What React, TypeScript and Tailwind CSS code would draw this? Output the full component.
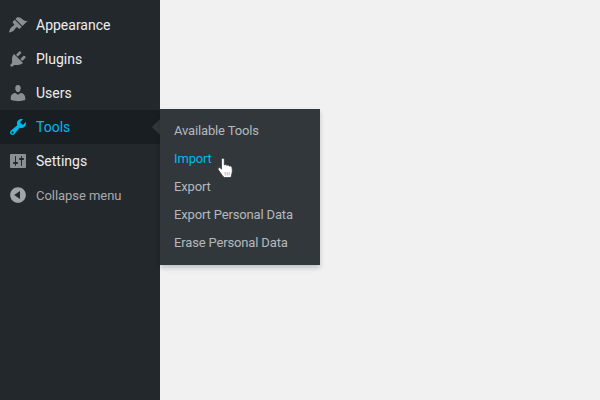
const icons = {
  appearance:
    "M14.48 11.06L7.41 3.99l1.5-1.5c.5-.56 2.3-.47 3.51.32 1.21.8 1.43 1.28 2.91 2.1 1.18.64 2.45 1.26 4.45.85zm-.71.71L6.7 4.7 4.93 6.47c-.39.39-.39 1.02 0 1.41l1.06 1.06c.39.39.39 1.03 0 1.42-.6.6-1.43 1.11-2.21 1.69-.35.26-.7.53-1.01.84C1.6 14.1 1 17.46 1 17.46s3.36-.6 4.57-1.77c.31-.31.58-.66.84-1.01.58-.78 1.09-1.61 1.69-2.21.39-.39 1.03-.39 1.42 0l1.06 1.06c.39.39 1.02.39 1.41 0z",
  plugins:
    "M13.11 4.36L9.87 7.6 8 5.73l3.24-3.24c.35-.34 1.05-.2 1.56.32.52.51.66 1.21.31 1.55zm-8 1.77l.91-1.12 9.01 9.01-1.19.84c-.71.71-2.63 1.16-3.82 1.16H6.14L4.9 17.26c-.59.59-1.54.59-2.12 0-.59-.58-.59-1.53 0-2.12l1.24-1.24v-3.88c0-1.13.4-3.19 1.09-3.89zm7.26 3.97l3.24-3.24c.34-.35 1.04-.21 1.55.31.52.51.66 1.21.31 1.55l-3.24 3.25z",
  users:
    "M10 9.25c-2.27 0-2.73-3.44-2.73-3.44C7 4.02 7.82 2 9.97 2c2.16 0 2.98 2.02 2.71 3.81 0 0-.41 3.44-2.68 3.44zm0 2.57L12.72 10c2.39 0 4.52 2.33 4.52 4.53v2.49s-3.65 1.13-7.24 1.13c-3.65 0-7.24-1.13-7.24-1.13v-2.49c0-2.25 1.94-4.48 4.47-4.48z",
  tools:
    "M16.68 9.77c-1.34 1.34-3.3 1.67-4.95.99l-5.41 6.52c-.99.99-2.59.99-3.58 0s-.99-2.59 0-3.57l6.52-5.42c-.68-1.65-.35-3.61.99-4.95 1.28-1.28 3.12-1.62 4.72-1.06l-2.89 2.89 2.82 2.82 2.86-2.87c.53 1.58.18 3.39-1.08 4.65zM3.81 16.21c.4.39 1.04.39 1.43 0 .4-.4.4-1.04 0-1.43-.39-.4-1.03-.4-1.43 0-.39.39-.39 1.03 0 1.43z",
  settings:
    "M18 16V4c0-.55-.45-1-1-1H3c-.55 0-1 .45-1 1v12c0 .55.45 1 1 1h14c.55 0 1-.45 1-1zM8 11h1c.55 0 1 .45 1 1s-.45 1-1 1H8v1.5c0 .28-.22.5-.5.5s-.5-.22-.5-.5V13H6c-.55 0-1-.45-1-1s.45-1 1-1h1V5.5c0-.28.22-.5.5-.5s.5.22.5.5V11zm5-2h-1c-.55 0-1-.45-1-1s.45-1 1-1h1V5.5c0-.28.22-.5.5-.5s.5.22.5.5V7h1c.55 0 1 .45 1 1s-.45 1-1 1h-1v5.5c0 .28-.22.5-.5.5s-.5-.22-.5-.5V9z",
  collapse:
    "M10 2.16c4.33 0 7.84 3.51 7.84 7.84s-3.51 7.84-7.84 7.84S2.16 14.33 2.16 10 5.71 2.16 10 2.16zm2 11.72V6.12L6.18 9.97z",
};

function MenuIcon({ d, className }: { d: string; className: string }) {
  return (
    <svg viewBox="0 0 20 20" className={`h-5 w-5 shrink-0 fill-current ${className}`}>
      <path d={d} />
    </svg>
  );
}

function MenuRow({ d, label }: { d: string; label: string }) {
  return (
    <div className="flex h-[34px] items-center gap-2 pl-2 text-[#eeeeee]">
      <MenuIcon d={d} className="text-[#8a8f94]" />
      {label}
    </div>
  );
}

function HandCursor() {
  return (
    <svg viewBox="0 0 18 23" className="absolute left-[217px] top-[157px] h-[23px] w-[18px]">
      <path
        d="M4.500 2.500c0-1.800 2.800-1.800 2.800 0V8c.7-.9 2.300-.7 2.600.5.700-.8 2.200-.5 2.400.7.800-.6 2.400-.2 2.600 1.100.6 2.400.5 5-.2 7l-.7 3.200H7.500L6 19.500 1.300 12.800c-.9-1.500.8-2.900 2-1.900l1.200 1.300z"
        fill="#fff"
        stroke="#3a3a3a"
        strokeWidth="0.8"
        strokeLinejoin="round"
      />
      <path d="M8.200 15v3.500M10.200 15v3.500M12.200 15v3.500" stroke="#999" strokeWidth="0.7" />
    </svg>
  );
}

export default function App() {
  return (
    <div className="relative flex h-[400px] w-[600px] overflow-hidden bg-[#f1f1f1] font-['Roboto',sans-serif] text-[14px]">
      {/* Sidebar */}
      <div className="w-40 bg-[#23282d] pt-2">
        <MenuRow d={icons.appearance} label="Appearance" />
        <MenuRow d={icons.plugins} label="Plugins" />
        <MenuRow d={icons.users} label="Users" />
        <div className="flex h-[34px] items-center gap-2 bg-[#191e23] pl-2 text-[#00b9eb]">
          <MenuIcon d={icons.tools} className="text-[#00b9eb]" />
          Tools
        </div>
        <MenuRow d={icons.settings} label="Settings" />
        <div className="flex h-[34px] items-center gap-2 pl-2 text-[13px] tracking-[-0.05px] text-[#aaaaaa]">
          <MenuIcon d={icons.collapse} className="text-[#a0a5aa]" />
          <span className="pt-0.5">Collapse menu</span>
        </div>
      </div>

      {/* Flyout */}
      <div className="absolute left-[152px] top-[119px] h-0 w-0 border-y-8 border-r-8 border-y-transparent border-r-[#32373c]" />
      <div className="absolute left-40 top-[109px] w-40 bg-[#32373c] py-2 text-[13px] tracking-[-0.15px] text-[#b4b9be] shadow-[0_3px_5px_rgba(0,0,0,0.2)]">
        <div className="flex h-7 items-center pl-3.5">Available Tools</div>
        <div className="flex h-7 items-center pl-3.5 text-[#00b9eb]">Import</div>
        <div className="flex h-7 items-center pl-3.5">Export</div>
        <div className="flex h-7 items-center pl-3.5">Export Personal Data</div>
        <div className="flex h-7 items-center pl-3.5">Erase Personal Data</div>
      </div>

      <HandCursor />
    </div>
  );
}
